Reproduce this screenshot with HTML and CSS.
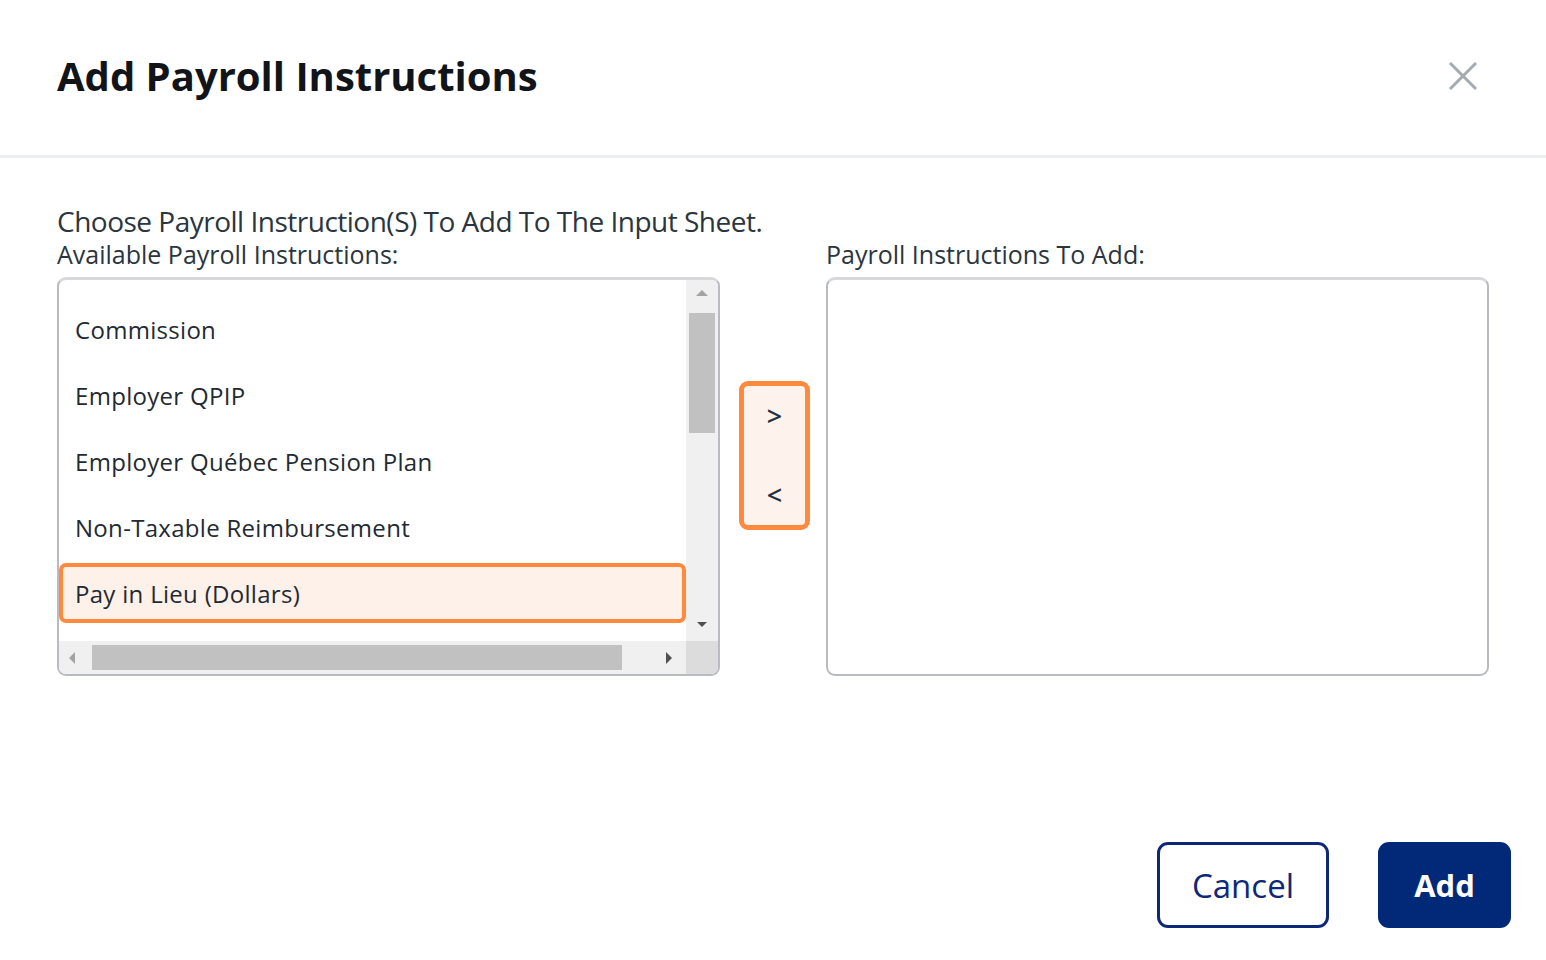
FILE: index.html
```html
<!DOCTYPE html>
<html lang="en">
<head>
<meta charset="utf-8">
<title>Add Payroll Instructions</title>
<link rel="stylesheet" href="styles.css">
</head>
<body>
<div class="dialog">
  <header class="dlg-header">
    <h1 class="dlg-title">Add Payroll Instructions</h1>
    <button class="close-btn" aria-label="Close">
      <svg width="30" height="30" viewBox="0 0 30 30"><path d="M2 2 L28 28 M28 2 L2 28" stroke="#a3abb1" stroke-width="3" fill="none"/></svg>
    </button>
  </header>
  <div class="dlg-body">
    <p class="intro">Choose Payroll Instruction(S) To Add To The Input Sheet.</p>
    <div class="picker">
      <div class="col">
        <div class="label">Available Payroll Instructions:</div>
        <div class="listbox">
          <div class="list-view">
            <ul class="items">
              <li class="item">Commission</li>
              <li class="item">Employer QPIP</li>
              <li class="item">Employer Québec Pension Plan</li>
              <li class="item">Non-Taxable Reimbursement</li>
              <li class="item selected">Pay in Lieu (Dollars)</li>
            </ul>
          </div>
          <div class="vscroll">
            <span class="arr arr-up"></span>
            <span class="vthumb"></span>
            <span class="vspace"></span>
            <span class="arr arr-down"></span>
          </div>
          <div class="hscroll">
            <span class="arr arr-left"></span>
            <span class="hthumb"></span>
            <span class="hspace"></span>
            <span class="arr arr-right"></span>
          </div>
          <div class="corner"></div>
        </div>
      </div>
      <div class="mover">
        <button class="move-btn">&gt;</button>
        <button class="move-btn">&lt;</button>
      </div>
      <div class="col">
        <div class="label">Payroll Instructions To Add:</div>
        <div class="listbox empty"></div>
      </div>
    </div>
  </div>
  <footer class="dlg-footer">
    <button class="btn btn-outline">Cancel</button>
    <button class="btn btn-primary">Add</button>
  </footer>
</div>
</body>
</html>
```

FILE: styles.css
```css
* { box-sizing: border-box; }
html, body { margin: 0; padding: 0; }
body {
  background: #ffffff;
  font-family: "Open Sans", "Noto Sans", sans-serif;
  color: #1f2a33;
  width: 1546px;
  height: 960px;
  overflow: hidden;
}
.dialog { display: flex; flex-direction: column; height: 960px; }

.dlg-header {
  height: 158px;
  display: flex;
  align-items: center;
  justify-content: space-between;
  padding: 0 68px 4px 57px;
  border-bottom: 3px solid #eceeef;
}
.dlg-title {
  margin: 0;
  font-size: 40px;
  font-weight: 700;
  color: #111418;
}
.close-btn {
  background: none;
  border: 0;
  padding: 0;
  width: 30px;
  height: 30px;
  display: flex;
}

.dlg-body {
  padding: 45px 0 0 57px;
}
.intro {
  margin: 0;
  font-size: 28px;
  letter-spacing: -0.5px;
  color: #2a3540;
  line-height: 36px;
  white-space: nowrap;
}
.picker {
  display: flex;
  align-items: flex-start;
}
.col { width: 663px; display: flex; flex-direction: column; }
.label {
  font-size: 25px;
  letter-spacing: 0;
  color: #2a3540;
  line-height: 30px;
  height: 38px;
  white-space: nowrap;
}
.listbox {
  width: 663px;
  height: 399px;
  border: 2px solid #b8bcc0;
  border-top: 3px solid #d6d8da;
  border-radius: 9px;
  background: #fff;
  overflow: hidden;
  display: grid;
  grid-template-columns: 1fr 32px;
  grid-template-rows: 1fr 33px;
}
.list-view { overflow: hidden; }
.items {
  list-style: none;
  margin: 0;
  padding: 19px 0 0 0;
  display: flex;
  flex-direction: column;
  gap: 6px;
}
.item {
  height: 60px;
  display: flex;
  align-items: center;
  padding-left: 16px;
  font-size: 24px;
  letter-spacing: 0.3px;
  color: #1f2a33;
  white-space: nowrap;
}
.item.selected {
  border: 4px solid #ff8a3d;
  border-radius: 7px;
  background: #fef1e9;
  padding-left: 12px;
}

.vscroll {
  background: #f0f0f0;
  display: flex;
  flex-direction: column;
  align-items: center;
  padding: 10px 0 14px 0;
}
.vthumb { width: 26px; height: 120px; background: #c1c1c1; margin-top: 17px; }
.vspace { flex: 1; }
.hscroll {
  background: #f0f0f0;
  display: flex;
  align-items: center;
  padding: 0 14px 0 10px;
}
.hthumb { width: 530px; height: 25px; background: #c1c1c1; margin-left: 17px; }
.hspace { flex: 1; }
.corner { background: #dcdcdc; }

.arr { width: 0; height: 0; display: block; }
.arr-up { border-left: 6px solid transparent; border-right: 6px solid transparent; border-bottom: 6px solid #a3a3a3; }
.arr-down { border-left: 5px solid transparent; border-right: 5px solid transparent; border-top: 5px solid #505050; }
.arr-left { border-top: 6px solid transparent; border-bottom: 6px solid transparent; border-right: 6px solid #a3a3a3; }
.arr-right { border-top: 6px solid transparent; border-bottom: 6px solid transparent; border-left: 6px solid #505050; }

.listbox.empty { display: block; }

.mover {
  width: 71px;
  height: 149px;
  margin: 142px 16px 0 19px;
  border: 5px solid #ff8a3d;
  border-radius: 9px;
  background: #fef3ec;
  display: flex;
  flex-direction: column;
  align-items: center;
  justify-content: space-between;
  padding: 15px 0;
}
.move-btn {
  background: none;
  border: 0;
  font-family: "Open Sans", sans-serif;
  font-size: 27px;
  font-weight: 600;
  color: #243240;
  padding: 0;
  line-height: 30px;
}

.dlg-footer {
  margin-top: auto;
  display: flex;
  justify-content: flex-end;
  gap: 49px;
  padding: 0 35px 32px 0;
}
.btn {
  height: 86px;
  border-radius: 11px;
  font-family: "Open Sans", sans-serif;
  font-size: 31px;
  padding: 0;
}
.btn-outline {
  width: 172px;
  border: 3px solid #0e2878;
  background: #fff;
  color: #0e2878;
  font-size: 33px;
}
.btn-primary {
  width: 133px;
  border: 0;
  background: #022878;
  color: #fff;
  font-weight: 700;
}
```
